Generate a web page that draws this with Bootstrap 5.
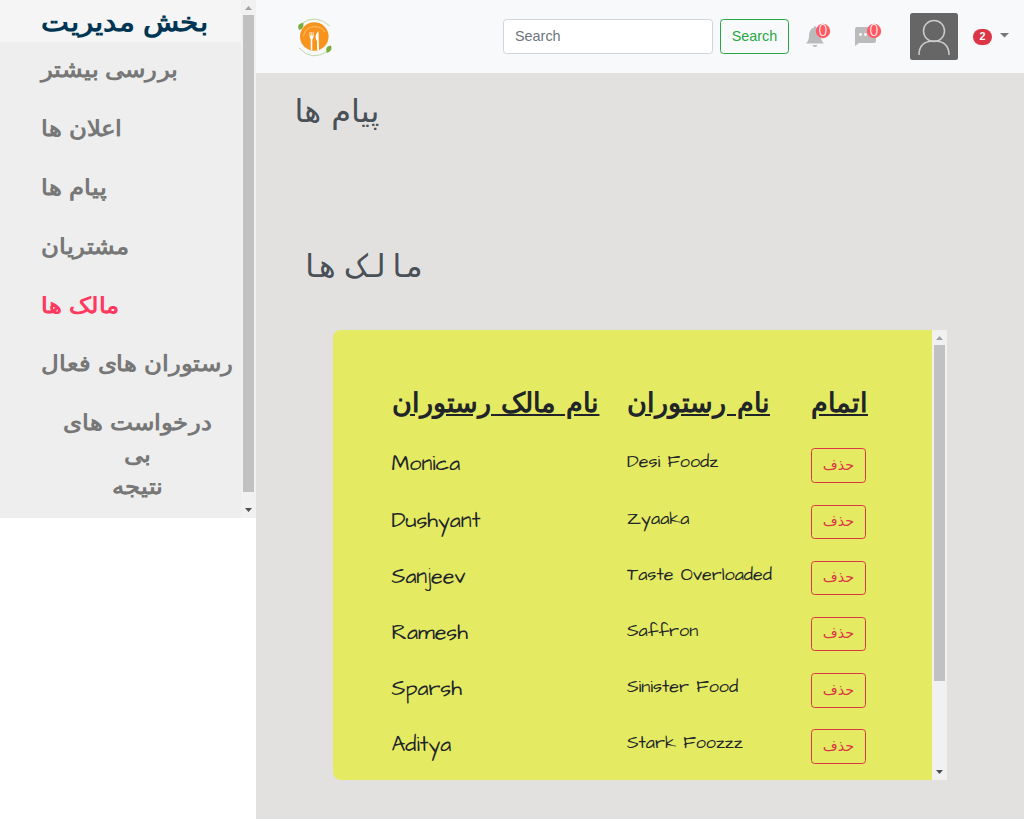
<!DOCTYPE html>
<html lang="fa">
<head>
<meta charset="utf-8">
<meta name="viewport" content="width=device-width, initial-scale=1">
<title>بخش مدیریت</title>
<link href="https://cdn.jsdelivr.net/npm/bootstrap@5.3.0/dist/css/bootstrap.min.css" rel="stylesheet">
<style>
html{font-size:14.4px}
body{font-family:"Liberation Sans",sans-serif;background:#fff;height:820px;overflow:hidden;color:#212529}
.fa-text{font-family:"DejaVu Sans",sans-serif}
.side{width:256px;height:518px;background:#eee}
.side-title{height:72px;background:#f5f5f5;color:#003653;font-size:26px;font-weight:700;padding:3px 0 0 41px}
.side-title span{transform:scaleX(1.14);transform-origin:left}
.side-link{color:#777;font-size:21.6px;font-weight:700;line-height:32px;padding:12px 0 14.8px 41px;text-decoration:none}
.side-link span{display:inline-block;transform:scaleX(1.11);transform-origin:left}
.side-link.current{color:#ff3860}
.side-link.two-line{text-align:center}
.side-link.two-line span{width:163px;margin-left:-8px;transform-origin:center}
.bar{width:15px;background:#f1f1f1}
.bar-thumb{width:11px;background:#c1c1c1}
.bar svg{height:15px;width:15px}
.main-pane{height:819px;background:#e3e1df}
.topbar{height:73px;padding:0 15px 0 39px;background:#f8f9fa}
.search-box{width:210px;height:35px;border:1px solid #ced4da;border-radius:3.6px;padding:0 11px 2px;font-size:14.4px}
.search-box::placeholder{color:#6c757d}
.search-btn{width:69px;height:35px;border-radius:3.6px;padding:0;font-size:14.4px;color:#28a745;border-color:#28a745;margin-left:7px}
.alert-icon{width:29px;height:26px;margin-bottom:2px}
.bell{margin-left:15px}
.chat{margin-left:20px}
.pill{width:19px;height:16px;font-size:10.8px;background:#dc3545;border-radius:10px;margin-left:15px}
.page-h{font-weight:400;color:#495057;font-size:32px;line-height:40px;margin:18px 0 0 38.500px}
.owners-h{font-family:"DejaVu Sans Mono",monospace;word-spacing:-9px;margin:115px 0 44px 43px}
.panel{width:614px;height:450px;margin-left:77px;border-radius:8px 0 0 8px;background:#e4ea62}
.grid{padding:53px 0 0 58.500px}
.cols{display:grid;grid-template-columns:235.500px 184px 1fr}
.cols.line,.cols.head{font-family:"Architects Daughter",cursive}
.cols.head{height:54.400px;font-size:27.400px;font-weight:700;line-height:42px;text-decoration:underline}
.cols.line{height:56.200px}
.owner{font-size:21.600px;line-height:32px;padding-top:11px}
.eatery{font-size:18px;line-height:28px;padding-top:11px}
.del-btn{width:55px;height:34.400px;padding:0;margin-top:11px;border-radius:3.6px;color:#dc3545;border-color:#dc3545;font-size:14.4px}
</style>
<script src="https://cdn.jsdelivr.net/npm/bootstrap@5.3.0/dist/js/bootstrap.bundle.min.js"></script>
</head>
<body>
<div class="d-flex align-items-start">
  <aside class="side d-flex flex-shrink-0">
    <nav class="flex-grow-1 d-flex flex-column">
      <div class="side-title d-flex align-items-center"><span>بخش مدیریت</span></div>
      <a class="side-link"><span>بررسی بیشتر</span></a>
      <a class="side-link"><span>اعلان ها</span></a>
      <a class="side-link"><span>پیام ها</span></a>
      <a class="side-link"><span>مشتریان</span></a>
      <a class="side-link current"><span>مالک ها</span></a>
      <a class="side-link text-nowrap"><span>رستوران های فعال</span></a>
      <a class="side-link two-line"><span>درخواست های بی<br>نتیجه</span></a>
    </nav>
    <div class="bar d-flex flex-column align-items-center flex-shrink-0">
      <svg viewBox="0 0 15 15"><path d="M4 10h7L7.500 6z" fill="#a3a3a3"/></svg>
      <div class="bar-thumb" style="height:477px"></div>
      <svg class="mt-auto" viewBox="0 0 15 15"><path d="M4 5h7L7.500 9z" fill="#505050"/></svg>
    </div>
  </aside>
  <main class="main-pane flex-grow-1">
    <header class="topbar d-flex align-items-center">
      <svg width="38" height="42" viewBox="0 0 38 42">
        <circle cx="19.300" cy="20.500" r="14.300" fill="#f7941d"/>
        <path d="M6 8Q20-3 35 10M4 32Q17 46 33 35" fill="none" stroke="#b5d39d" stroke-width=".9"/>
        <path d="M4 14Q1 7 8.500 7Q9 13 4 14zM32 37Q29 30 36 29.500Q38 35 32 37z" fill="#7aae3c"/>
        <path d="M8.500 20Q10 11 20 10.500Q27 11 30 16" fill="none" stroke="#fbc27d" stroke-width=".9"/>
        <path d="M15 20v-4M16.700 20v-4M18.200 20v-4" stroke="#fff" stroke-width=".7"/>
        <path d="M14.600 19.500h4q0 3.500-1.300 4v10.500h-1.600V23.500q-1.100-.5-1.100-4zM23.500 15q-5 5-1.500 10v9h2z" fill="#fff"/>
      </svg>
      <form class="d-flex ms-auto">
        <input class="search-box" placeholder="Search">
        <button type="button" class="btn search-btn">Search</button>
      </form>
      <svg class="alert-icon bell" viewBox="0 0 29 26"><path d="M2 20.500Q5 18 5 13Q5 6 10 4.500Q10 3 11 3T12 4.500Q17 6 17 13Q17 18 20 20.500zM8.500 22h5q-.5 2-2.500 2t-2.500-2z" fill="#bbb"/><circle cx="19" cy="8" r="7.200" fill="#ff5964"/><text x="19" y="13" text-anchor="middle" font-size="15.500" font-family="Noto Sans" font-weight="300" fill="#fff">0</text></svg>
      <svg class="alert-icon chat" viewBox="0 0 29 26"><path d="M2 23V6q0-2 2-2h17q2 0 2 2v12q0 2-2 2H6z" fill="#bbb"/><circle cx="7.500" cy="11.500" r="1.400" fill="#fff"/><circle cx="12.500" cy="11.500" r="1.400" fill="#fff"/><circle cx="21" cy="8" r="7.200" fill="#ff5964"/><text x="21" y="13" text-anchor="middle" font-size="15.500" font-family="Noto Sans" font-weight="300" fill="#fff">0</text></svg>
      <svg width="48" height="47" style="margin-left:28px" viewBox="0 0 48 47"><rect width="48" height="47" rx="2.500" fill="#666"/><g fill="none" stroke="#ccc" stroke-width="1.500"><circle cx="24" cy="18" r="10.500"/><path d="M9 42Q9 28 24 28Q39 28 39 42"/></g></svg>
      <span class="pill d-flex align-items-center justify-content-center text-white fw-bold">2</span>
      <svg width="9" height="5" style="margin-left:8px;margin-bottom:3px" viewBox="0 0 9 5"><path d="M0 0h9L4.500 4.500z" fill="#777"/></svg>
    </header>
    <h1 class="page-h fa-text">پیام ها</h1>
    <h1 class="page-h owners-h">مالک ها</h1>
    <section class="panel d-flex">
      <div class="grid flex-grow-1">
        <div class="cols head"><span>نام مالک رستوران</span><span>نام رستوران</span><span>اتمام</span></div>
        <div class="cols line"><span class="owner">Monica</span><span class="eatery">Desi Foodz</span><button class="btn del-btn fa-text">حذف</button></div>
        <div class="cols line"><span class="owner">Dushyant</span><span class="eatery">Zyaaka</span><button class="btn del-btn fa-text">حذف</button></div>
        <div class="cols line"><span class="owner">Sanjeev</span><span class="eatery">Taste Overloaded</span><button class="btn del-btn fa-text">حذف</button></div>
        <div class="cols line"><span class="owner">Ramesh</span><span class="eatery">Saffron</span><button class="btn del-btn fa-text">حذف</button></div>
        <div class="cols line"><span class="owner">Sparsh</span><span class="eatery">Sinister Food</span><button class="btn del-btn fa-text">حذف</button></div>
        <div class="cols line"><span class="owner">Aditya</span><span class="eatery">Stark Foozzz</span><button class="btn del-btn fa-text">حذف</button></div>
      </div>
      <div class="bar d-flex flex-column align-items-center flex-shrink-0">
        <svg viewBox="0 0 15 15"><path d="M4 10h7L7.500 6z" fill="#a3a3a3"/></svg>
        <div class="bar-thumb" style="height:336px"></div>
        <svg class="mt-auto" viewBox="0 0 15 15"><path d="M4 5h7L7.500 9z" fill="#505050"/></svg>
      </div>
    </section>
  </main>
</div>
</body>
</html>
